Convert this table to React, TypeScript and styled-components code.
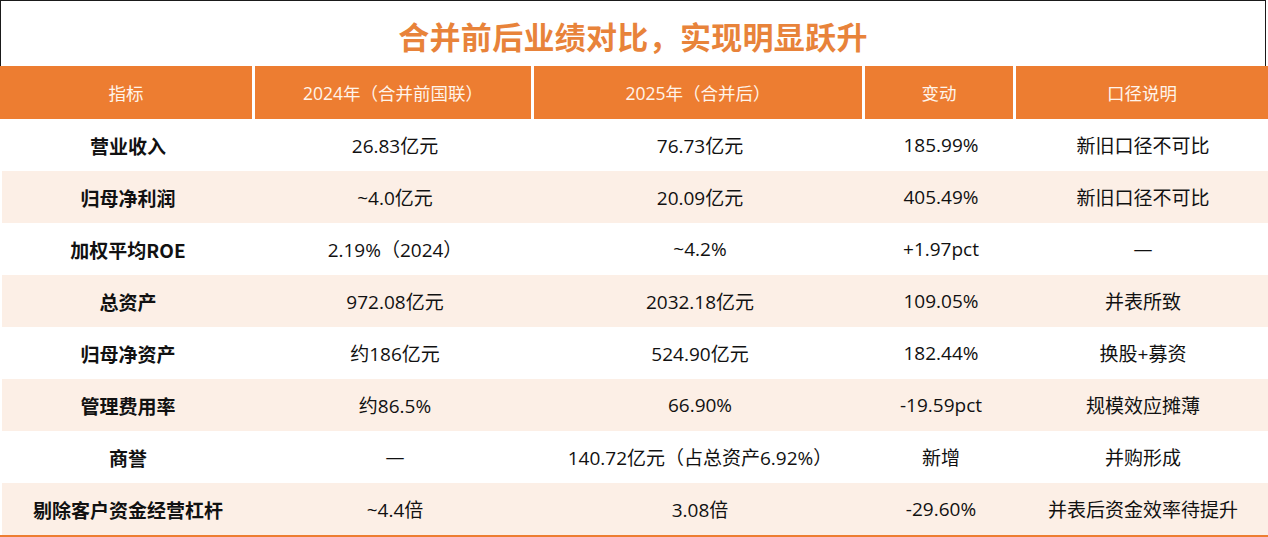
import React from "react";
import styled, { createGlobalStyle } from "styled-components";

const Global = createGlobalStyle`
  html, body { margin: 0; padding: 0; background: #ffffff; }
  body { font-family: "Open Sans", "Noto Sans CJK SC", sans-serif; }
`;

const COLS = "252px 276px 328px 148px 1fr";

const Page = styled.div`
  width: 1268px;
  height: 537px;
  display: flex;
  flex-direction: column;
  overflow: hidden;
`;

const TitleBox = styled.div`
  width: 1266px;
  height: 66px;
  box-sizing: border-box;
  border: 1.5px solid #1a1a1a;
  border-bottom: none;
  display: flex;
  align-items: center;
  justify-content: center;
`;

const Title = styled.h1`
  margin: 0;
  font-family: "Noto Sans CJK SC", sans-serif;
  font-size: 31px;
  font-weight: 700;
  color: #e8833a;
  letter-spacing: 0.3px;
  padding-top: 3px;
`;

const HeaderRow = styled.div`
  display: grid;
  grid-template-columns: ${COLS};
  column-gap: 3px;
  height: 53px;
  flex: none;
`;

const HeaderCell = styled.div`
  background: #ed7d31;
  color: #fff4ea;
  font-family: "Open Sans", "Noto Sans CJK SC", sans-serif;
  font-size: 17.5px;
  display: flex;
  align-items: center;
  justify-content: center;
`;

const Body = styled.div`
  display: flex;
  flex-direction: column;
  border-bottom: 2px solid #ed7d31;
`;

const Row = styled.div<{ $shade: boolean }>`
  display: grid;
  grid-template-columns: ${COLS};
  column-gap: 3px;
  height: 52px;
  background: ${(p) => (p.$shade ? "#fcefe6" : "#ffffff")};
  margin-left: 2px;
`;

const Cell = styled.div<{ $bold?: boolean }>`
  display: flex;
  align-items: center;
  justify-content: center;
  font-size: 19px;
  color: #111;
  font-weight: ${(p) => (p.$bold ? 700 : 400)};
  font-family: ${(p) =>
    p.$bold ? '"Noto Sans CJK SC", sans-serif' : '"Open Sans", "Noto Sans CJK SC", sans-serif'};
  white-space: nowrap;
`;

const headers = ["指标", "2024年（合并前国联）", "2025年（合并后）", "变动", "口径说明"];

const rows: string[][] = [
  ["营业收入", "26.83亿元", "76.73亿元", "185.99%", "新旧口径不可比"],
  ["归母净利润", "~4.0亿元", "20.09亿元", "405.49%", "新旧口径不可比"],
  ["加权平均ROE", "2.19%（2024）", "~4.2%", "+1.97pct", "—"],
  ["总资产", "972.08亿元", "2032.18亿元", "109.05%", "并表所致"],
  ["归母净资产", "约186亿元", "524.90亿元", "182.44%", "换股+募资"],
  ["管理费用率", "约86.5%", "66.90%", "-19.59pct", "规模效应摊薄"],
  ["商誉", "—", "140.72亿元（占总资产6.92%）", "新增", "并购形成"],
  ["剔除客户资金经营杠杆", "~4.4倍", "3.08倍", "-29.60%", "并表后资金效率待提升"],
];

export default function App() {
  return (
    <>
      <Global />
      <Page>
        <TitleBox>
          <Title>合并前后业绩对比，实现明显跃升</Title>
        </TitleBox>
        <HeaderRow>
          {headers.map((h) => (
            <HeaderCell key={h}>{h}</HeaderCell>
          ))}
        </HeaderRow>
        <Body>
          {rows.map((r, i) => (
            <Row key={r[0]} $shade={i % 2 === 1}>
              {r.map((c, j) => (
                <Cell key={j} $bold={j === 0}>
                  {c}
                </Cell>
              ))}
            </Row>
          ))}
        </Body>
      </Page>
    </>
  );
}
